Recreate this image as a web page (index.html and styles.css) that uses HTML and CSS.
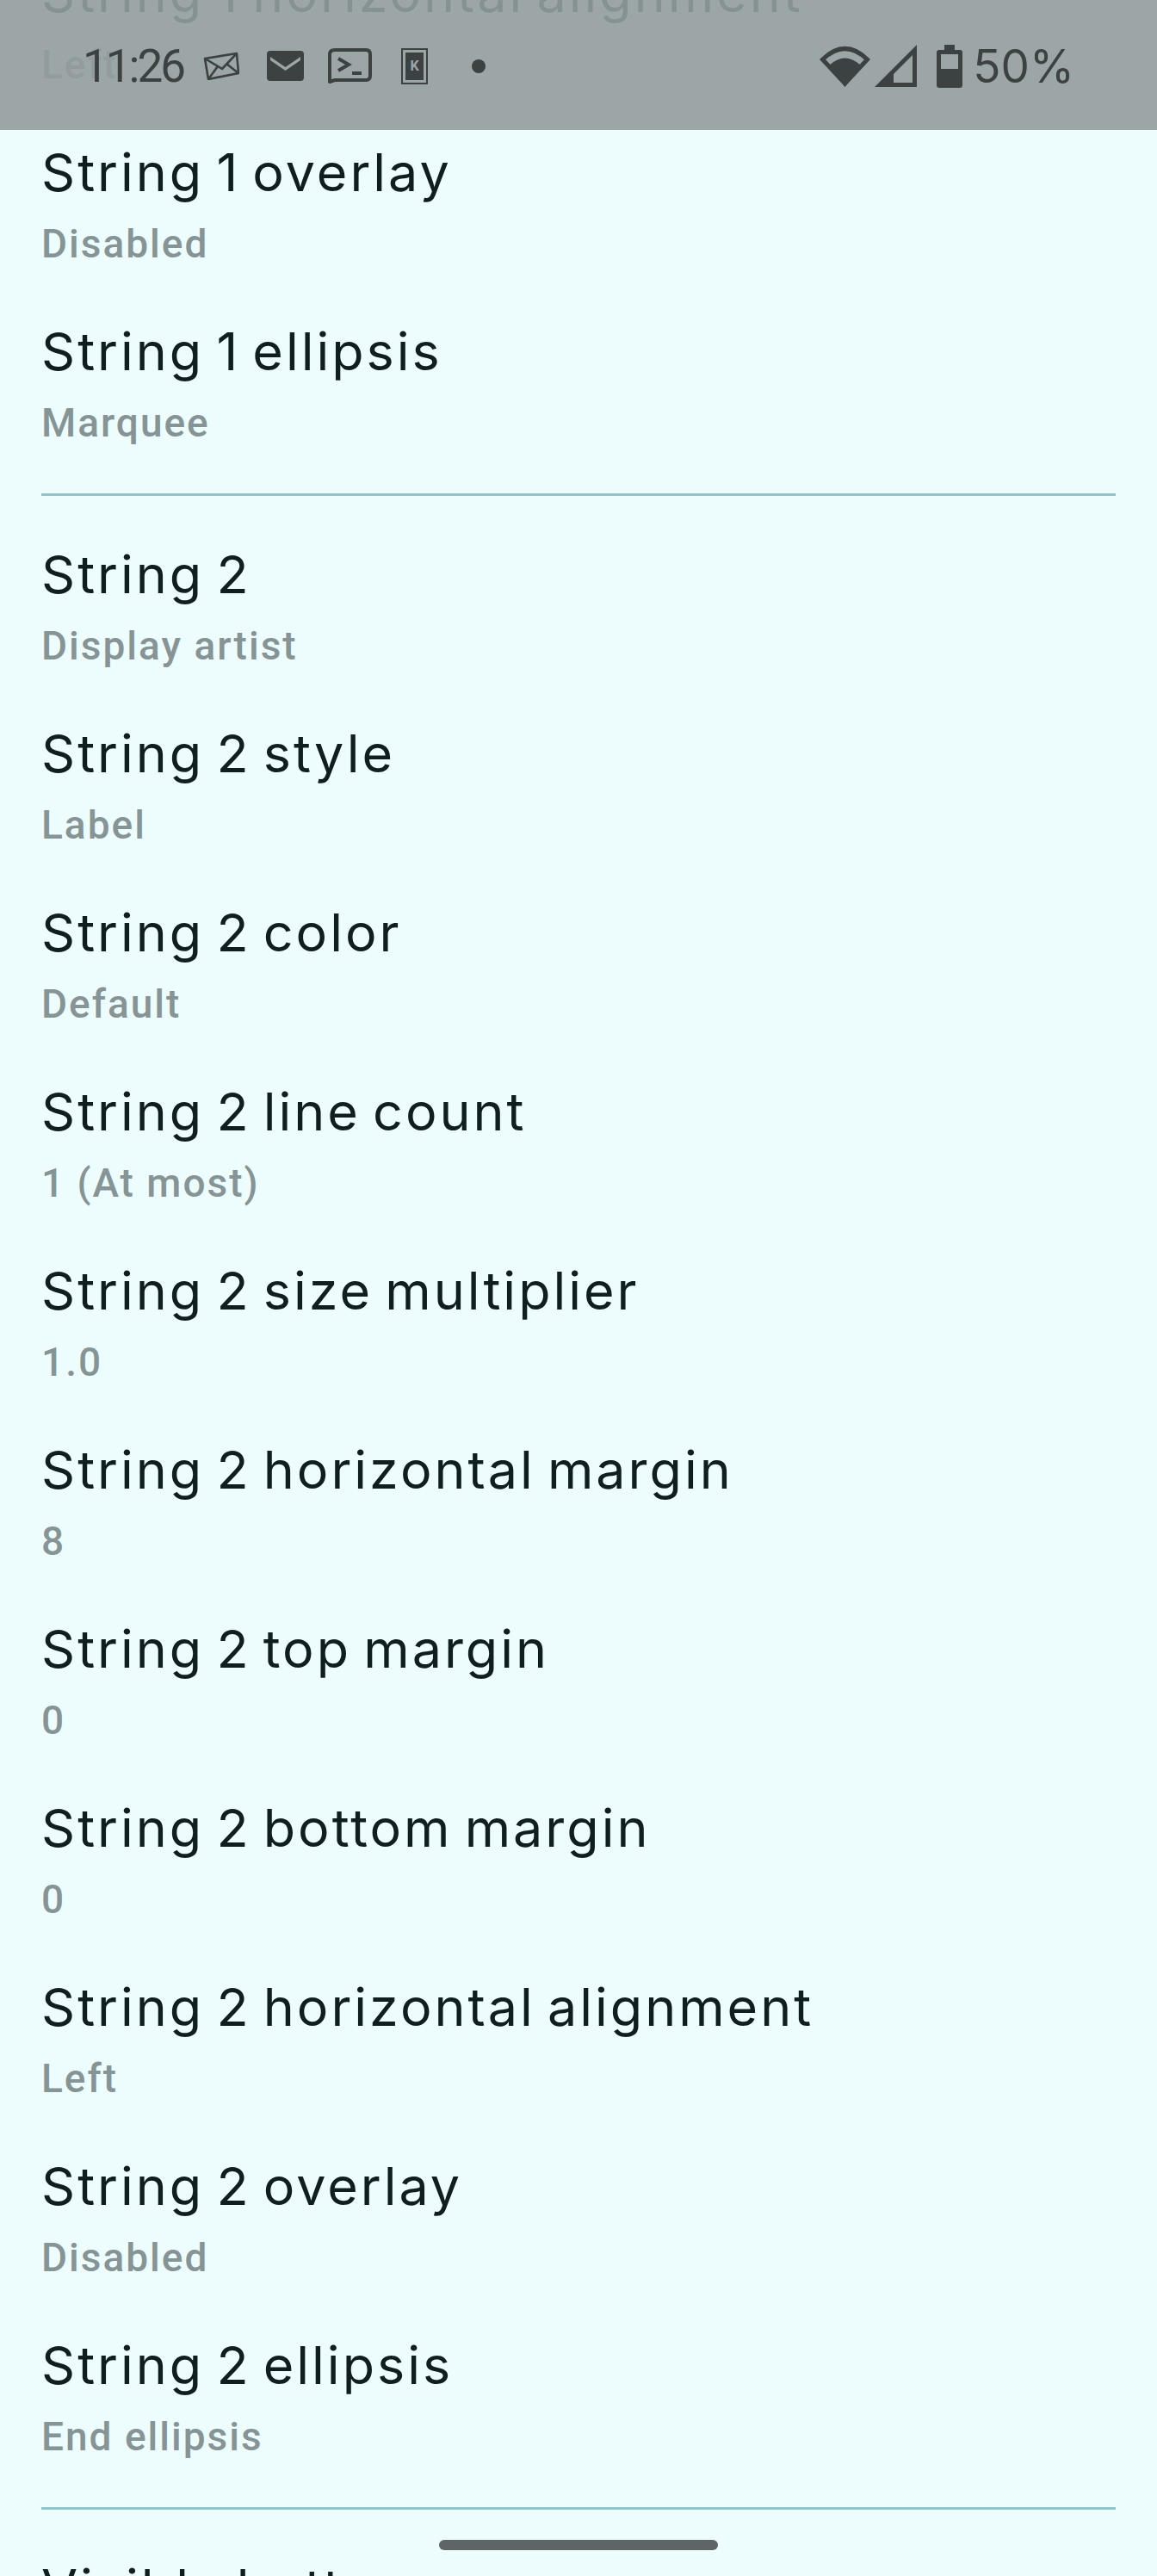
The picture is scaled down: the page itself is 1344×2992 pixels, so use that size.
FILE: index.html
```html
<!DOCTYPE html>
<html lang="en">
<head>
    <meta charset="UTF-8">
    <meta name="viewport" content="width=device-width, initial-scale=1.0">
    <title>String settings</title>
    <link rel="stylesheet" href="styles.css">
</head>
<body>
    <div class="screen">
        <div class="status-bar">
            <span class="clock">11:26</span>
            <svg class="icon icon-letter" viewBox="0 0 42 33">
                <g fill="none" stroke="#3c4142" stroke-width="2.6" stroke-linejoin="round">
                    <path d="M2 8 L39 2 L41 25 L6 32 Z"/>
                    <path d="M2 8 L22 20 L39 2"/>
                    <path d="M6 32 L17 17 M41 25 L27 14"/>
                </g>
            </svg>
            <svg class="icon icon-mail" viewBox="0 0 43 35">
                <path fill="#3c4142" fill-rule="evenodd" d="M4 0 H39 Q43 0 43 4 V31 Q43 35 39 35 H4 Q0 35 0 31 V4 Q0 0 4 0 Z M4 7 L21.500 19 L39 7 V11 L21.500 23 L4 11 Z"/>
            </svg>
            <svg class="icon icon-term" viewBox="0 0 51 42">
                <path fill="none" stroke="#3c4142" stroke-width="4" stroke-linejoin="round" d="M8 2 H44 Q49 2 49 7 V32 Q49 37 44 37 H8 L2 39 V7 Q2 2 8 2 Z"/>
                <path fill="none" stroke="#3c4142" stroke-width="4" d="M12 12 L24 19 L12 26"/>
                <path stroke="#3c4142" stroke-width="4" d="M28 29 H39"/>
            </svg>
            <svg class="icon icon-card" viewBox="0 0 31 42">
                <rect x="1" y="1" width="29" height="40" fill="none" stroke="#3c4142" stroke-width="2"/>
                <rect x="5" y="5" width="21" height="32" fill="#3c4142"/>
                <text x="15.500" y="26" text-anchor="middle" class="card-letter">K</text>
            </svg>
            <span class="dot"></span>
            <div class="status-right">
                <svg class="icon icon-wifi" viewBox="0 0 59 49">
                    <path fill="none" stroke="#3c4142" stroke-width="5" d="M3.500 17 Q29.500 -8 55.500 17 L29.500 45 Z"/>
                    <path fill="#3c4142" d="M11 24 Q29.500 7 48 24 L29.500 49 Z"/>
                </svg>
                <svg class="icon icon-signal" viewBox="0 0 49 49">
                    <path fill="#3c4142" fill-rule="evenodd" d="M0 49 L49 0 V49 Z M22 44 H44 V12 L22 34 Z"/>
                </svg>
                <svg class="icon icon-battery" viewBox="0 0 30 50">
                    <path fill="#3c4142" fill-rule="evenodd" d="M9 0 H21 V6 H27 Q30 6 30 9 V47 Q30 50 27 50 H3 Q0 50 0 47 V9 Q0 6 3 6 H9 Z M5 11 V28 H25 V11 Z"/>
                </svg>
                <span class="level">50%</span>
            </div>
        </div>

        <div class="settings">
            <div class="row"><div class="name">String 1 horizontal alignment</div><div class="value">Left</div></div>
            <div class="row"><div class="name">String 1 overlay</div><div class="value">Disabled</div></div>
            <div class="row"><div class="name">String 1 ellipsis</div><div class="value">Marquee</div></div>
            <hr class="divider">
            <div class="row"><div class="name">String 2</div><div class="value">Display artist</div></div>
            <div class="row"><div class="name">String 2 style</div><div class="value">Label</div></div>
            <div class="row"><div class="name">String 2 color</div><div class="value">Default</div></div>
            <div class="row"><div class="name">String 2 line count</div><div class="value">1 (At most)</div></div>
            <div class="row"><div class="name">String 2 size multiplier</div><div class="value">1.0</div></div>
            <div class="row"><div class="name">String 2 horizontal margin</div><div class="value">8</div></div>
            <div class="row"><div class="name">String 2 top margin</div><div class="value">0</div></div>
            <div class="row"><div class="name">String 2 bottom margin</div><div class="value">0</div></div>
            <div class="row"><div class="name">String 2 horizontal alignment</div><div class="value">Left</div></div>
            <div class="row"><div class="name">String 2 overlay</div><div class="value">Disabled</div></div>
            <div class="row"><div class="name">String 2 ellipsis</div><div class="value">End ellipsis</div></div>
            <hr class="divider">
            <div class="row"><div class="name">Visible buttons</div><div class="value">Default</div></div>
        </div>

        <div class="gesture-bar"></div>
    </div>
</body>
</html>
```

FILE: styles.css
```css
body {
    margin: 0;
    background-color: #edfdfe;
}
.screen {
    position: relative;
    width: 1344px;
    height: 2992px;
    overflow: hidden;
    background-color: #edfdfe;
}
.status-bar {
    position: absolute;
    top: 0;
    left: 0;
    right: 0;
    height: 151px;
    box-sizing: border-box;
    padding: 2px 96px 0;
    display: flex;
    align-items: center;
    background-color: rgba(147, 157, 158, 0.905);
    color: #3c4142;
    font-family: Roboto, sans-serif;
}
.clock {
    font-size: 53px;
    line-height: 60px;
    letter-spacing: -3px;
    width: 140px;
}
.icon {
    display: block;
    flex: none;
}
.icon-letter {
    width: 42px;
    height: 33px;
    margin-right: 32px;
}
.icon-mail {
    width: 43px;
    height: 35px;
    margin-right: 28px;
}
.icon-term {
    width: 51px;
    height: 42px;
    margin-right: 34px;
}
.icon-card {
    width: 31px;
    height: 42px;
    margin-right: 51px;
}
.card-letter {
    font-family: Roboto, sans-serif;
    font-size: 16px;
    font-weight: 700;
    fill: #9ca5a6;
}
.dot {
    width: 16px;
    height: 16px;
    border-radius: 50%;
    background-color: #3c4142;
}
.status-right {
    margin-left: auto;
    display: flex;
    align-items: center;
}
.icon-wifi {
    width: 59px;
    height: 49px;
    margin-right: 5px;
}
.icon-signal {
    width: 49px;
    height: 49px;
    margin-right: 23px;
}
.icon-battery {
    width: 30px;
    height: 50px;
    margin-right: 12px;
}
.level {
    font-family: Inter, sans-serif;
    font-size: 53px;
    line-height: 60px;
}
.settings {
    margin-top: -74px;
}
.row {
    padding: 24px 48px 18px;
    height: 166px;
}
.name {
    font-family: Inter, sans-serif;
    font-size: 61px;
    line-height: 84px;
    letter-spacing: 3px;
    word-spacing: -6px;
    color: #0f1f20;
}
.value {
    font-family: Roboto, sans-serif;
    font-size: 46px;
    font-weight: 500;
    line-height: 82px;
    letter-spacing: 2px;
    color: #869496;
}
.divider {
    margin: 23px 48px 25px;
    border: none;
    height: 3px;
    background-color: #8fc4c8;
}
.gesture-bar {
    position: absolute;
    left: 510px;
    top: 2950px;
    width: 324px;
    height: 12px;
    border-radius: 6px;
    background-color: #5f6466;
}
```
